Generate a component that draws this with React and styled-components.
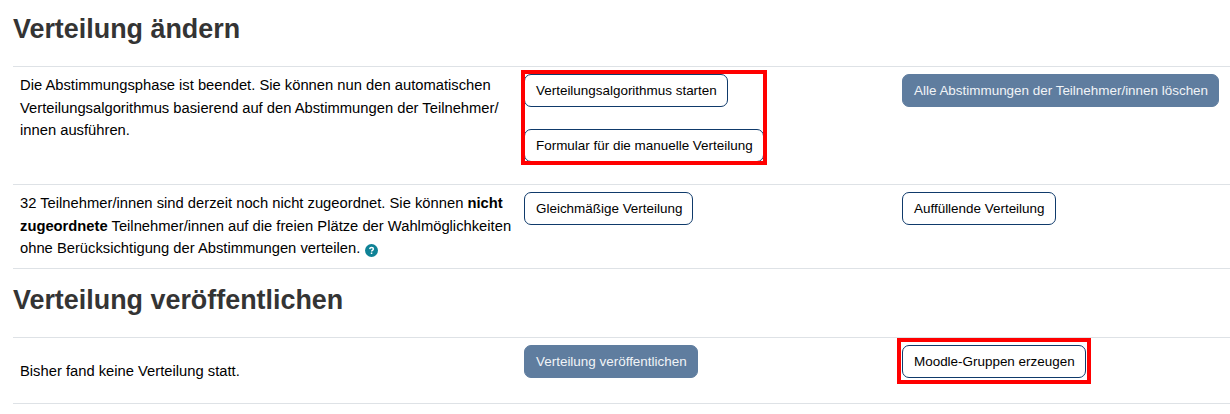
import React from "react";
import styled, { createGlobalStyle } from "styled-components";

const GlobalStyle = createGlobalStyle`
  html, body {
    margin: 0;
    padding: 0;
    background: #fff;
    overflow: hidden;
  }
  body {
    font-family: "Liberation Sans", Arial, sans-serif;
    font-size: 14.75px;
    color: #000;
  }
`;

const Page = styled.main`
  width: 1230px;
  height: 414px;
  padding: 13px 0 0 13px;
  box-sizing: border-box;
`;

const Heading = styled.h3`
  margin: 0;
  height: ${(p) => p.$height}px;
  padding-top: ${(p) => p.$top || 0}px;
  box-sizing: border-box;
  font-size: 26.9px;
  line-height: 32px;
  font-weight: 700;
  color: #343434;
`;

const Row = styled.section`
  display: grid;
  grid-template-columns: 504px 378px 1fr;
  height: ${(p) => p.$height}px;
  margin-bottom: ${(p) => p.$gap || 0}px;
  border-top: 1px solid #dee2e6;
  border-bottom: ${(p) => (p.$last ? "1px solid #dee2e6" : "0")};
`;

const Cell = styled.div`
  padding: 7px;
  display: flex;
  flex-direction: column;
  align-items: flex-start;
`;

const TextCell = styled(Cell)`
  padding-right: 0;
`;

const Text = styled.p`
  margin: 0;
  line-height: 22.5px;
  padding-top: ${(p) => p.$top || 0}px;
`;

const Highlight = styled.div`
  position: relative;
  display: flex;
  flex-direction: column;
  align-items: flex-start;
  gap: ${(p) => p.$gap || 0}px;

  &::after {
    content: "";
    position: absolute;
    top: ${(p) => p.$inset[0]}px;
    right: ${(p) => p.$inset[1]}px;
    bottom: ${(p) => p.$inset[2]}px;
    left: ${(p) => p.$inset[3]}px;
    border: 4px solid #f00;
    pointer-events: none;
  }
`;

const Button = styled.button`
  height: 33px;
  padding: 0 10px 0 11px;
  font: 13.45px "Liberation Sans", Arial, sans-serif;
  white-space: nowrap;
  border-radius: 7px;
  box-sizing: border-box;
  border: 1px solid ${(p) => (p.$muted ? "#5f7d9f" : "#0f3a6b")};
  background: ${(p) => (p.$muted ? "#5f7d9f" : "#fff")};
  color: ${(p) => (p.$muted ? "#f1f4f7" : "#000")};
`;

const HelpIcon = styled.svg`
  display: inline-block;
  width: 13px;
  height: 13px;
  margin-left: 5px;
  vertical-align: -4px;
`;

const Help = () => (
  <HelpIcon viewBox="0 0 13 13" aria-hidden="true">
    <circle cx="6.5" cy="6.5" r="6.5" fill="#0f8296" />
    <path
      d="M4.7 5.100c.1-1 .9-1.600 1.900-1.600s1.800.6 1.800 1.500c0 1.400-1.800 1.300-1.800 2.500"
      fill="none"
      stroke="#fff"
      strokeWidth="1.400"
    />
    <rect x="5.800" y="8.500" width="1.500" height="1.500" fill="#fff" />
  </HelpIcon>
);

export default function App() {
  return (
    <Page>
      <GlobalStyle />
      <Heading $height={53}>Verteilung ändern</Heading>

      <Row $height={102} $gap={15}>
        <TextCell>
          <Text>
            Die Abstimmungsphase ist beendet. Sie können nun den automatischen
            Verteilungsalgorithmus basierend auf den Abstimmungen der Teilnehmer/
            innen ausführen.
          </Text>
        </TextCell>
        <Cell>
          <Highlight $gap={22} $inset={[-4, -3, -3, -3]}>
            <Button>Verteilungsalgorithmus starten</Button>
            <Button>Formular für die manuelle Verteilung</Button>
          </Highlight>
        </Cell>
        <Cell>
          <Button $muted>Alle Abstimmungen der Teilnehmer/innen löschen</Button>
        </Cell>
      </Row>

      <Row $height={83} $last>
        <TextCell>
          <Text>
            32 Teilnehmer/innen sind derzeit noch nicht zugeordnet. Sie können{" "}
            <strong>nicht zugeordnete</strong> Teilnehmer/innen auf die freien
            Plätze der Wahlmöglichkeiten ohne Berücksichtigung der Abstimmungen
            verteilen.
            <Help />
          </Text>
        </TextCell>
        <Cell>
          <Button>Gleichmäßige Verteilung</Button>
        </Cell>
        <Cell>
          <Button>Auffüllende Verteilung</Button>
        </Cell>
      </Row>

      <Heading $height={68} $top={15}>Verteilung veröffentlichen</Heading>

      <Row $height={65} $last>
        <TextCell>
          <Text $top={15}>Bisher fand keine Verteilung statt.</Text>
        </TextCell>
        <Cell>
          <Button $muted>Verteilung veröffentlichen</Button>
        </Cell>
        <Cell>
          <Highlight $inset={[-7, -5, -6, -5]}>
            <Button>Moodle-Gruppen erzeugen</Button>
          </Highlight>
        </Cell>
      </Row>
    </Page>
  );
}
